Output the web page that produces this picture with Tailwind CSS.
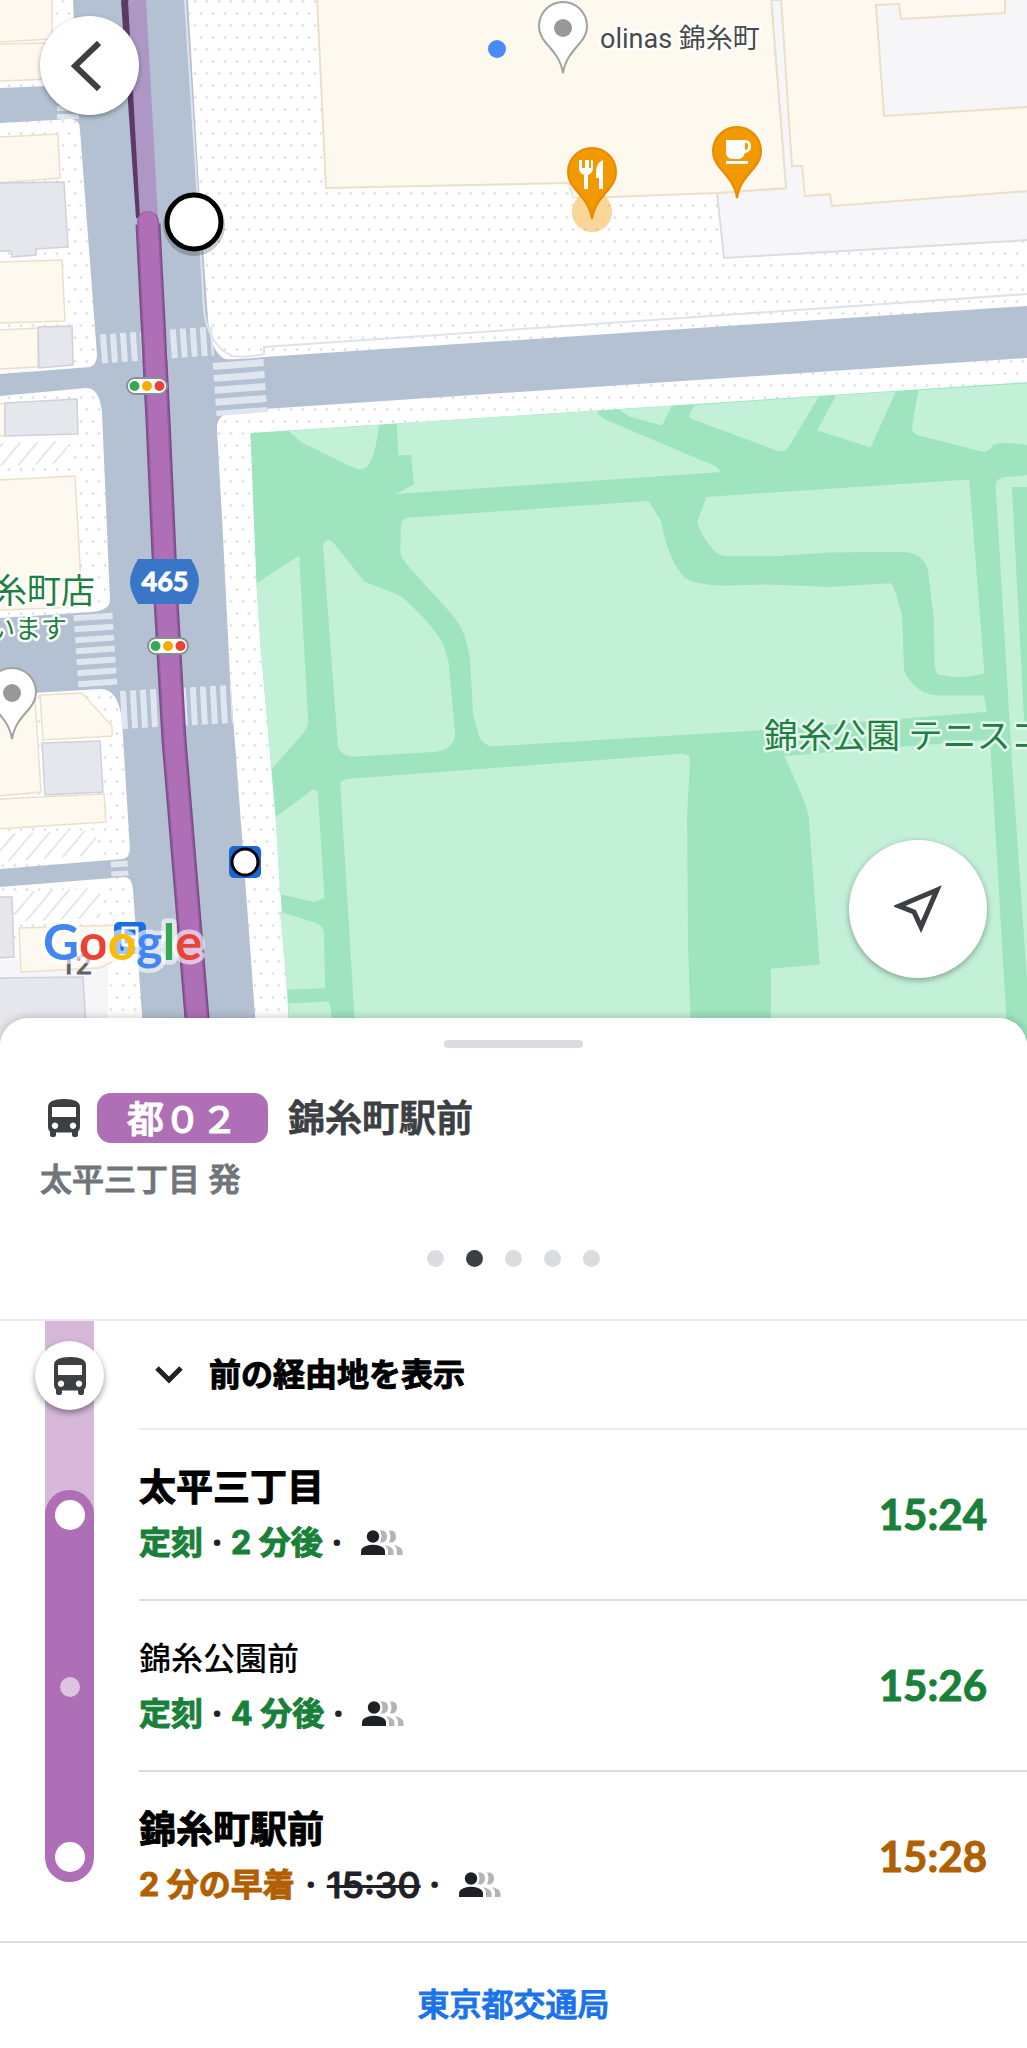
<!DOCTYPE html>
<html lang="ja">
<head>
  <meta charset="UTF-8" />
  <meta name="viewport" content="width=device-width, initial-scale=1.0"/>
  <title>都０２ 錦糸町駅前</title>
  <script src="https://cdn.jsdelivr.net/npm/@tailwindcss/browser@4"></script>
</head>
<body class="bg-white text-black font-['Inter','Noto_Sans_CJK_JP',sans-serif]">

  <!-- 共通アイコン -->
  <svg class="hidden" aria-hidden="true">
    <symbol id="bus" viewBox="0 0 32 38">
      <path fill-rule="evenodd" d="M0 8Q0 0 16 0T32 8V28Q32 31 30 32.500V36Q30 38 28 38H26Q24 38 24 36V33.500H8V36Q8 38 6 38H4Q2 38 2 36V32.500Q0 31 0 28ZM4 8V18H28V8ZM7 23.500a3.200 3.200 0 1 0 .01 0ZM25 23.500a3.200 3.200 0 1 0 .01 0Z"/>
    </symbol>
    <symbol id="crowd" viewBox="0 0 42 25">
      <g fill="#202124">
        <circle cx="12" cy="6.500" r="6.200"/>
        <path d="M0 25V21.500Q0 17.500 5 16Q12 13.500 19 16Q24 17.500 24 21.500V25Z"/>
      </g>
      <g fill="#b4b4b4">
        <path d="M19 .6Q26 0 26 6.500T19 12.500Q22 6.500 19 .6Z"/>
        <path d="M28 .6Q35 0 35 6.500T28 12.500Q31 6.500 28 .6Z"/>
        <path d="M24 15Q32.500 17 32.500 21.500V25H27V21Q27 17.500 24 15Z"/>
        <path d="M33 15Q41.500 17 41.500 21.500V25H36V21Q36 17.500 33 15Z"/>
      </g>
    </symbol>
    <symbol id="pin" viewBox="0 0 52 76" overflow="visible">
      <path d="M26 73C24 60 17 52 9 43Q2 35 2 26A24 24 0 0 1 50 26Q50 35 43 43C35 52 28 60 26 73Z" stroke-width="2"/>
    </symbol>
    <symbol id="signal" viewBox="0 0 42 18">
      <rect x="1" y="1" width="40" height="16" rx="8" fill="#fff" stroke="#8a8f96" stroke-width="2"/>
      <circle cx="8.500" cy="9" r="5" fill="#34a853"/>
      <circle cx="21" cy="9" r="5" fill="#f9ab00"/>
      <circle cx="33.500" cy="9" r="5" fill="#ea4335"/>
    </symbol>
  </svg>

  <!-- 地図 -->
  <section class="relative" aria-label="地図">
    <svg class="block w-full h-auto" viewBox="0 0 1027 1042">
      <defs>
        <pattern id="dots" width="12" height="24" patternUnits="userSpaceOnUse">
          <circle cx="3" cy="1.500" r="1.500" fill="#e0e3e9"/>
          <circle cx="9" cy="13.500" r="1.500" fill="#e0e3e9"/>
        </pattern>
        <pattern id="hatch" width="13" height="13" patternUnits="userSpaceOnUse" patternTransform="rotate(40)">
          <path d="M1 0V13" stroke="#e3e6ec" stroke-width="2"/>
        </pattern>
      </defs>
      <rect width="1027" height="1042" fill="#fff"/>
      <rect width="1027" height="1042" fill="url(#dots)"/>

      <!-- 道路 -->
      <g fill="#b3c1d2">
        <path d="M73 0H188L199 187L208 320Q211 353 225 359Q235 360 264 357L1027 306V358L264 409L232 412Q216 415 217 430L222 517L230 677L242 837L257 1042H144L133 890Q132 877 124 877L0 887V869L123 859Q130 857 130 850L122 720Q118 688 100 689L0 695V618L92 612Q110 610 110 600L102 412Q99 387 86 388L0 396V374L90 367Q97 364 97 355L80 130Q80 119 70 119L0 123V88L50 86L76 80Z"/>
      </g>
      <path d="M185 0L197 187L204 310Q208 345 232 356Q245 358 264 354V347L1027 294" fill="none" stroke="#dfe2ea" stroke-width="2"/>
      <g stroke="#dfe6f0" fill="none">
        <path d="M101 349L213 341" stroke-width="29" stroke-dasharray="6 4"/>
        <path d="M238 361L242 414" stroke-width="51" stroke-dasharray="7 5"/>
        <path d="M93 614L98 688" stroke-width="39" stroke-dasharray="6 5"/>
        <path d="M121 710L232 704" stroke-width="38" stroke-dasharray="6 4"/>
        <path d="M119 861L120 876" stroke-width="17" stroke-dasharray="6 4"/>
        <path d="M68 106V119" stroke-width="22" stroke-dasharray="5 3"/>
      </g>

      <!-- 左側の建物 -->
      <path d="M0 960L108 955V1042H0Z" fill="#f6f5f8"/>
      <path d="M0 443L68 441L66 463L0 466ZM0 834L96 830L97 855L0 862ZM16 892L100 888V918L16 922Z" fill="#fff"/>
      <path d="M0 443L68 441L66 463L0 466ZM0 834L96 830L97 855L0 862ZM16 892L100 888V918L16 922Z" fill="url(#hatch)"/>
      <g fill="#fef9ee" stroke="#ecdfc8" stroke-width="1.500">
        <path d="M-2 -2H52V39L-2 42ZM-2 44L50 43L52 79L-2 81ZM-2 137L58 134L60 178L-2 183ZM-2 262L62 260L65 321L-2 323ZM-2 330L38 328V367L-2 369ZM-2 404H5V436H-2Z"/>
        <path d="M-2 480L75 476L82 600L81 607L-2 610ZM-2 700L35 698L41 792L-2 796ZM40 695L82 693L112 726V736L43 740ZM-2 799L104 794L106 822L-2 829ZM19 928L125 925V955L100 968L21 972Z"/>
      </g>
      <g fill="#e6e7ec" stroke="#cfd0de" stroke-width="1.500">
        <path d="M-2 183L64 182L68 247L36 249V255L12 257L11 251H-2ZM38 327L72 326L73 365L39 368ZM5 403L77 399L78 434L5 436ZM42 743L100 741L103 792L45 795ZM-2 897H12L14 957L-2 958ZM-2 978L83 977L87 1044H-2Z"/>
      </g>

      <!-- 右側の建物 -->
      <path d="M771 0L786 188L717 193L724 258L1029 240V-2Z" fill="#f6f5f8" stroke="#dcdde3" stroke-width="2"/>
      <g fill="#fef9ee" stroke="#ecdfc8" stroke-width="2">
        <path d="M317 -2L326 188L569 183L573 198L610 197L717 193L786 188L771 -2Z"/>
        <path d="M781 -2L792 166H802L805 196L830 194L832 206L1029 191V107L884 116L876 5L899 4L901 19L1005 13V-2Z"/>
      </g>
      <path d="M570 184L576 220H608V198H573Z" fill="#fff"/>

      <!-- 錦糸公園 -->
      <g transform="translate(230 380) scale(.5084 .4146)" fill="#c3f1d7">
        <path d="M40 128L1570 5V1600H118L112 1470L90 1060L60 640L52 490Z" fill="#9ee4be"/>
        <path d="M115 123L293 108Q288 170 275 200Q262 225 240 210L140 150Z"/>
        <path d="M328 105L722 74Q725 90 745 99L955 208L967 222L325 275L362 252L356 180L331 182Z"/>
        <path d="M765 71L869 62L850 110L785 88Z"/>
        <path d="M915 60L1158 40L1100 160Q1092 178 1075 170L905 92Q898 88 915 60Z"/>
        <path d="M1192 37L1310 28L1260 163L1155 122Z"/>
        <path d="M1354 25L1570 8V157Q1520 148 1502 155Q1492 175 1480 173L1350 132Q1340 125 1342 110Z"/>
        <path d="M350 332L823 292L848 340Q860 430 893 475Q915 495 975 496L1060 493L1175 499L1300 490Q1308 500 1322 570L1326 700Q1345 755 1390 761H1483L1489 800L1050 844L512 884Q495 875 490 860L478 805L472 670Q465 610 440 570L370 475Q335 430 335 415L336 350Q338 335 350 332Z"/>
        <path d="M937 282L1454 240L1484 708Q1450 718 1420 716L1393 711Q1387 700 1386 690L1384 570L1373 460Q1365 415 1320 414L1175 416L1070 425H985Q960 425 955 415Q925 375 919 342Z"/>
        <path d="M1570 229L1520 235Q1507 238 1506 255L1538 920L1570 1490V830L1562 820L1538 258H1570Z"/>
        <path d="M52 490L136 424L154 830Q150 845 140 858L82 938L60 640Z"/>
        <path d="M183 400Q190 375 205 395L265 487Q330 515 340 525Q400 590 420 640L430 680L443 860Q435 895 400 897L240 909Q215 905 212 880Z"/>
        <path d="M90 1054L160 990Q172 985 173 1000L186 1250L165 1259L98 1240Z"/>
        <path d="M98 1282L170 1310Q184 1315 185 1335L187 1467L112 1470Z"/>
        <path d="M115 1504L192 1499Q197 1502 199 1520L201 1600H119Z"/>
        <path d="M235 962L885 902Q905 902 905 915L899 1050L901 1360L907 1600H248L217 975Q217 965 235 962Z"/>
        <path d="M1090 907L1495 868L1530 1600H1064V1420L1160 1410L1138 1050Q1130 1010 1090 907Z"/>
      </g>

      <!-- ルート -->
      <g fill="none">
        <path d="M125 0L140 218" stroke="#5c3a66" stroke-width="8"/>
        <path d="M137 0L149 218" stroke="#ae97c4" stroke-width="18"/>
        <path d="M148 224L158 420L166 600L174 740L199 1042" stroke="#7b4c86" stroke-width="25" stroke-linejoin="round"/>
        <path d="M148 222L158 420L166 600L174 740L199 1042" stroke="#955ca0" stroke-width="22" stroke-linejoin="round" stroke-linecap="round"/>
        <path d="M148 221L158 420L166 600L174 740L199 1042" stroke="#ae6fb6" stroke-width="19" stroke-linejoin="round" stroke-linecap="round"/>
      </g>
      <use href="#signal" x="126" y="377" width="42" height="18"/>
      <use href="#signal" x="147" y="637" width="42" height="18"/>
      <path d="M138 559H191Q199 572 199 581T191 604H138Q130 591 130 582T138 559Z" fill="#3976c8"/>
      <text x="165" y="591" text-anchor="middle" fill="#fff" stroke="#fff" class="font-['Lato',sans-serif] font-bold text-[27px]">465</text>

      <circle cx="194" cy="225" r="31" fill="#000" opacity=".2"/>
      <circle cx="194" cy="222" r="27" fill="#fff" stroke="#000" stroke-width="5"/>
      <rect x="229" y="846" width="32" height="32" rx="5" fill="#1967d2"/>
      <circle cx="245" cy="862" r="13" fill="#fff" stroke="#000" stroke-width="3"/>

      <!-- スポット -->
      <circle cx="497" cy="49" r="9" fill="#4a8cf7"/>
      <g fill="#fff" stroke="#a2a2a2">
        <use href="#pin" x="537" y="0" width="52" height="76"/>
        <use href="#pin" x="-14" y="666" width="52" height="76"/>
      </g>
      <circle cx="563" cy="28" r="9" fill="#989898"/>
      <circle cx="12" cy="693" r="9" fill="#989898"/>
      <circle cx="592" cy="212" r="20" fill="#f29900" opacity=".4"/>
      <g fill="#f29900" stroke="#e88a00">
        <use href="#pin" x="566" y="146" width="52" height="76"/>
        <use href="#pin" x="711" y="125" width="52" height="76"/>
      </g>
      <path d="M579 160V168Q579 173 584 175V189H588V175Q593 173 593 168V160H591V168H589V160H585V168H582V160ZM603 160Q596 162 596 174V178H599V189H603Z" fill="#fff"/>
      <path fill-rule="evenodd" d="M726 140H745Q751 140 751 146T745 153Q743 159 738 159H732Q726 158 726 152ZM745 143V150Q748 150 748 146T745 143ZM726 161H748V164H726Z" fill="#fff"/>

      <g stroke="#fff" stroke-width="5" stroke-linejoin="round" class="[paint-order:stroke]">
        <text x="600" y="48" fill="#4a4a4a" class="font-['Roboto','Noto_Sans_CJK_JP',sans-serif] text-[27px]">olinas 錦糸町</text>
        <g fill="#1e8040" class="font-['Roboto','Noto_Sans_CJK_JP',sans-serif]">
          <text x="95" y="603" text-anchor="end" class="text-[34px]">糸町店</text>
          <text x="67" y="638" text-anchor="end" class="text-[26px]">います</text>
          <text x="764" y="748" stroke="#e3f8ec" class="text-[34px]">錦糸公園 テニスコート</text>
        </g>
      </g>

      <rect x="114" y="922" width="32" height="32" rx="5" fill="#1a6fe0"/>
      <path d="M123 928H137V945H123ZM123 937H137" fill="none" stroke="#fff" stroke-width="3"/>
      <text x="60" y="974" fill="#5f6368" stroke="#5f6368" class="font-['Roboto',sans-serif] text-[28px]">12</text>
      <text x="43" y="960" stroke="#fff" stroke-opacity=".6" stroke-width="9" stroke-linejoin="round" class="font-['Lato',sans-serif] text-[50px] font-bold [paint-order:stroke]"><tspan fill="#4285f4">G</tspan><tspan fill="#ea4335">o</tspan><tspan fill="#fbbc04">o</tspan><tspan fill="#4285f4">g</tspan><tspan fill="#34a853">l</tspan><tspan fill="#ea4335">e</tspan></text>
    </svg>

    <button type="button" aria-label="戻る" class="absolute left-10 top-4 size-[99px] rounded-full bg-white shadow-[0_2px_5px_rgba(0,0,0,0.35)] flex items-center justify-center">
      <svg class="w-[30px] h-[50px] mr-2" viewBox="0 0 30 50" fill="none" stroke="#3c4043" stroke-width="6"><path d="M28 2L4 25L28 48"/></svg>
    </button>
    <button type="button" aria-label="現在地" class="absolute right-10 bottom-16 size-[138px] rounded-full bg-white shadow-[0_2px_6px_rgba(0,0,0,0.35)] flex items-center justify-center">
      <svg class="size-[48px]" viewBox="0 0 48 48" fill="none" stroke="#3c4043" stroke-width="5"><path d="M43 5L5 21L20 27L27 42Z"/></svg>
    </button>
  </section>

  <!-- 下部シート -->
  <main class="relative -mt-6 rounded-t-[28px] bg-white shadow-[0_-1px_8px_rgba(0,0,0,0.2)]">
    <header class="pt-[22px] pb-[52px] border-b-2 border-[#e8eaed]">
      <div class="mx-auto h-2 w-[139px] rounded-full bg-[#dadce0]"></div>
      <div class="mt-11 flex items-center pl-12">
        <svg class="w-8 h-[38px] fill-[#3c4043]"><use href="#bus"/></svg>
        <span class="ml-[17px] flex h-[50px] items-center rounded-[14px] bg-[#ae6fb6] px-[30px] text-[37px] font-medium text-white font-['Noto_Sans_CJK_JP',sans-serif] [-webkit-text-stroke:1px]">都０２</span>
        <h1 class="ml-5 pt-[2px] text-[37px] leading-[50px] font-medium text-[#3c4043] [-webkit-text-stroke:1px]">錦糸町駅前</h1>
      </div>
      <p class="mt-3 pl-10 text-[32px] leading-[48px] font-medium text-[#70757a] [-webkit-text-stroke:1px]">太平三丁目 発</p>
      <div class="mt-[46px] flex justify-center gap-[22px]">
        <span class="size-[17px] rounded-full bg-[#dadce0]"></span>
        <span class="size-[17px] rounded-full bg-[#3c4043]"></span>
        <span class="size-[17px] rounded-full bg-[#dadce0]"></span>
        <span class="size-[17px] rounded-full bg-[#dadce0]"></span>
        <span class="size-[17px] rounded-full bg-[#dadce0]"></span>
      </div>
    </header>

    <ul>
      <li class="flex h-[109px] pl-[45px]">
        <div class="flex w-[49px] shrink-0 items-center justify-center bg-[#d7b8db]">
          <div class="flex size-[69px] shrink-0 items-center justify-center rounded-full bg-white shadow-[0_3px_6px_rgba(0,0,0,0.4)]">
            <svg class="w-8 h-[38px] fill-[#3c4043]"><use href="#bus"/></svg>
          </div>
        </div>
        <div class="ml-[45px] flex-1 border-b-2 border-[#e8eaed]">
          <button type="button" class="flex h-full w-full items-center pl-4 text-[32px] font-bold [-webkit-text-stroke:1px]">
            <svg class="w-7 h-5" viewBox="0 0 28 20" fill="none" stroke="#202124" stroke-width="5"><path d="M2 3L14 15L26 3"/></svg>
            <span class="ml-[26px]">前の経由地を表示</span>
          </button>
        </div>
      </li>

      <li class="flex h-[171px] pl-[45px]">
        <div class="flex w-[49px] shrink-0 bg-[#d7b8db] pt-[60px]">
          <div class="flex flex-1 justify-center rounded-t-full bg-[#ae6fb6] pt-[10px]">
            <span class="size-[30px] rounded-full bg-white"></span>
          </div>
        </div>
        <div class="ml-[45px] flex flex-1 items-center justify-between border-b-2 border-[#dadce0] pr-10">
          <div>
            <h2 class="text-[37px] leading-[56px] font-bold [-webkit-text-stroke:1px]">太平三丁目</h2>
            <p class="flex items-center text-[32px] leading-[54px] font-bold text-[#188038] [-webkit-text-stroke:1px]">
              定刻<span class="w-7 text-center text-[#202124]">·</span>2 分後<span class="w-7 text-center text-[#202124]">·</span>
              <svg class="ml-[10px] w-[42px] h-[25px]" role="img" aria-label="混雑状況"><use href="#crowd"/></svg>
            </p>
          </div>
          <time class="font-['Lato',sans-serif] text-[42px] font-bold text-[#188038] [-webkit-text-stroke:1px]">15:24</time>
        </div>
      </li>

      <li class="flex h-[171px] pl-[45px]">
        <div class="flex w-[49px] shrink-0 items-center justify-center bg-[#ae6fb6]">
          <span class="size-5 rounded-full bg-[#dfc4e2]"></span>
        </div>
        <div class="ml-[45px] flex flex-1 items-center justify-between border-b-2 border-[#dadce0] pr-10">
          <div>
            <h2 class="text-[32px] leading-[56px] font-medium">錦糸公園前</h2>
            <p class="flex items-center text-[32px] leading-[54px] font-bold text-[#188038] [-webkit-text-stroke:1px]">
              定刻<span class="w-7 text-center text-[#202124]">·</span>4 分後<span class="w-7 text-center text-[#202124]">·</span>
              <svg class="ml-[10px] w-[42px] h-[25px]" role="img" aria-label="混雑状況"><use href="#crowd"/></svg>
            </p>
          </div>
          <time class="font-['Lato',sans-serif] text-[42px] font-bold text-[#188038] [-webkit-text-stroke:1px]">15:26</time>
        </div>
      </li>

      <li class="flex h-[169px] pl-[45px]">
        <div class="flex h-[110px] w-[49px] shrink-0 items-end justify-center rounded-b-full bg-[#ae6fb6] pb-[10px]">
          <span class="size-[30px] rounded-full bg-white"></span>
        </div>
        <div class="ml-[45px] flex flex-1 items-center justify-between pr-10">
          <div>
            <h2 class="text-[37px] leading-[56px] font-bold [-webkit-text-stroke:1px]">錦糸町駅前</h2>
            <p class="flex items-center text-[32px] leading-[54px] font-bold text-[#b06000] [-webkit-text-stroke:1px]">
              2 分の早着<span class="w-8 text-center text-[#202124]">·</span><s class="text-[36px] font-medium text-[#202124]">15:30</s><span class="w-7 text-center text-[#202124]">·</span>
              <svg class="ml-[10px] w-[42px] h-[25px]" role="img" aria-label="混雑状況"><use href="#crowd"/></svg>
            </p>
          </div>
          <time class="font-['Lato',sans-serif] text-[42px] font-bold text-[#b06000] [-webkit-text-stroke:1px]">15:28</time>
        </div>
      </li>
    </ul>

    <footer class="border-t-2 border-[#dadce0] pt-[38px] pb-[18px] text-center">
      <a href="#" class="text-[32px] leading-[48px] font-medium text-[#1a73e8] [-webkit-text-stroke:1px]">東京都交通局</a>
    </footer>
  </main>
</body>
</html>
